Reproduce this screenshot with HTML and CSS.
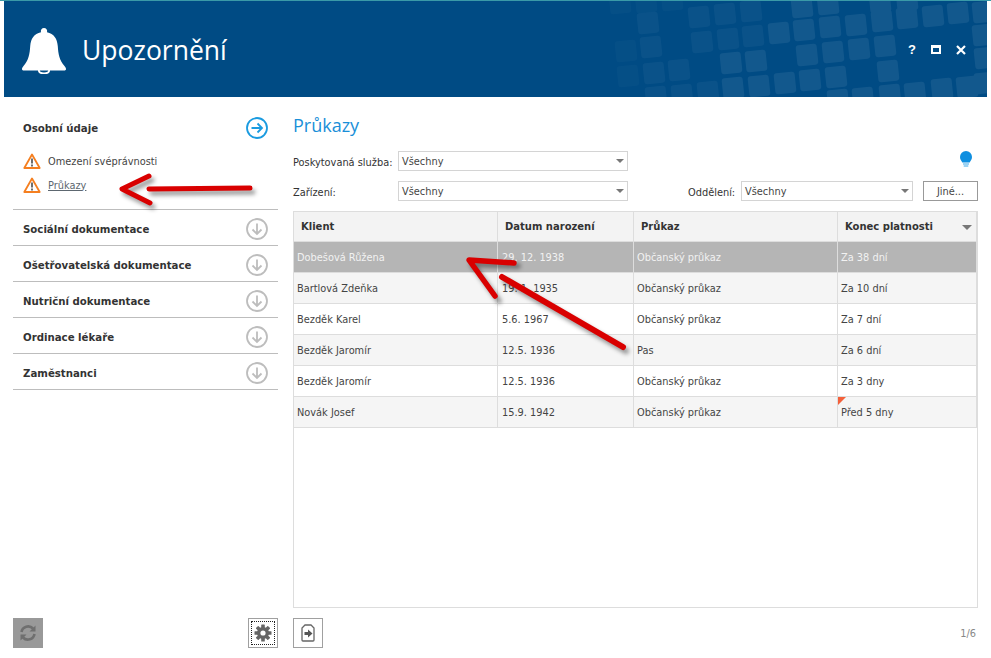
FILE: index.html
```html
<!DOCTYPE html>
<html lang="cs">
<head>
<meta charset="utf-8">
<title>Upozornění</title>
<link rel="stylesheet" href="styles.css">
</head>
<body>
<div class="window">
  <header class="header">
    <svg class="pattern" viewBox="4 1 983 96" width="983" height="96">
      <defs><rect id="sq" x="-10.5" y="-10.5" width="21" height="21" rx="3" transform="rotate(-6)"/></defs>
      <g fill="#fff" opacity=".02">
        <use href="#sq" x="626" y="51"/><use href="#sq" x="628" y="76"/><use href="#sq" x="620" y="3"/><use href="#sq" x="646" y="2"/><use href="#sq" x="672" y="0"/>
      </g>
      <g fill="#fff" opacity=".04">
        <use href="#sq" x="648" y="23"/><use href="#sq" x="651" y="47"/><use href="#sq" x="654" y="73"/><use href="#sq" x="679" y="70"/><use href="#sq" x="656" y="97"/><use href="#sq" x="682" y="95"/><use href="#sq" x="708" y="92"/><use href="#sq" x="699" y="17"/><use href="#sq" x="725" y="14"/><use href="#sq" x="751" y="11"/><use href="#sq" x="702" y="42"/><use href="#sq" x="728" y="39"/><use href="#sq" x="753" y="36"/>
      </g>
      <g fill="#fff" opacity=".07">
        <use href="#sq" x="731" y="63"/><use href="#sq" x="756" y="61"/><use href="#sq" x="733" y="88"/><use href="#sq" x="759" y="86"/><use href="#sq" x="785" y="83"/><use href="#sq" x="810" y="80"/><use href="#sq" x="779" y="33"/><use href="#sq" x="804" y="30"/><use href="#sq" x="802" y="7"/><use href="#sq" x="807" y="55"/><use href="#sq" x="828" y="4"/><use href="#sq" x="830" y="27"/><use href="#sq" x="856" y="25"/><use href="#sq" x="833" y="52"/><use href="#sq" x="859" y="49"/><use href="#sq" x="885" y="46"/><use href="#sq" x="836" y="77"/><use href="#sq" x="888" y="71"/><use href="#sq" x="838" y="100"/><use href="#sq" x="863" y="98"/><use href="#sq" x="890" y="95"/><use href="#sq" x="915" y="93"/><use href="#sq" x="942" y="89"/><use href="#sq" x="967" y="87"/><use href="#sq" x="985" y="83"/><use href="#sq" x="985" y="58"/><use href="#sq" x="983" y="35"/><use href="#sq" x="983" y="12"/><use href="#sq" x="958" y="13"/><use href="#sq" x="933" y="16"/><use href="#sq" x="907" y="18"/><use href="#sq" x="882" y="21"/><use href="#sq" x="880" y="2"/><use href="#sq" x="907" y="0"/>
      </g>
    </svg>
    <svg class="bell" viewBox="0 0 44 46" width="44" height="46">
      <path fill="#fff" d="M22 0a3.2 3.2 0 0 1 3 4.2c7 1.3 10.2 6.500 10.800 14 .5 7.500 1.500 14 6.700 19.800 1.500 1.700 1.500 2.800 1.500 3.200 0 .6-.6 1.300-1.800 1.300H1.800C.6 42.500 0 41.800 0 41.200c0-.4 0-1.500 1.500-3.200 5.200-5.800 6.200-12.300 6.700-19.800C8.800 10.700 12 5.500 19 4.200A3.200 3.200 0 0 1 22 0z"/>
      <path fill="none" stroke="#fff" stroke-width="2" d="M17 42a5.200 3.500 0 0 0 1 2.500c2 1.300 6 1.300 8 0a5.200 3.500 0 0 0 1-2.500"/>
    </svg>
    <h1 class="title">Upozornění</h1>
    <div class="controls">
      <span class="help">?</span>
      <span class="maximize"></span>
      <svg viewBox="0 0 10 10" width="10" height="10"><path d="M1 1l8 8M9 1l-8 8" stroke="#fff" stroke-width="2.200" fill="none"/></svg>
    </div>
  </header>

  <div class="content">
    <aside class="sidebar">
      <section class="section section-open">
        <div class="section-head">
          <span>Osobní údaje</span>
          <svg class="round" viewBox="0 0 22 22" width="22" height="22"><circle cx="11" cy="11" r="10" fill="none" stroke="#1a9be0" stroke-width="1.800"/><path d="M5.500 11h10.500M11.500 6.500l4.500 4.500-4.500 4.500" fill="none" stroke="#1a9be0" stroke-width="1.800"/></svg>
        </div>
        <ul class="items">
          <li class="item">
            <svg viewBox="0 0 18 16" width="18" height="16"><path d="M9 1.500l7.700 13.500H1.300z" fill="#fff" stroke="#f57f20" stroke-width="1.800" stroke-linejoin="round"/><path d="M9 5.500v5M9 11.500v2" stroke="#555" stroke-width="1.700"/></svg>
            <span>Omezení svéprávnosti</span>
          </li>
          <li class="item">
            <svg viewBox="0 0 18 16" width="18" height="16"><path d="M9 1.500l7.700 13.500H1.300z" fill="#fff" stroke="#f57f20" stroke-width="1.800" stroke-linejoin="round"/><path d="M9 5.500v5M9 11.500v2" stroke="#555" stroke-width="1.700"/></svg>
            <a class="link">Průkazy</a>
          </li>
        </ul>
      </section>
      <section class="section">
        <div class="section-head"><span>Sociální dokumentace</span><svg class="round" viewBox="0 0 22 22" width="22" height="22"><circle cx="11" cy="11" r="10" fill="none" stroke="#bdbdbd" stroke-width="1.800"/><path d="M11 5.500v10.500M6.500 11.500l4.500 4.500 4.500-4.500" fill="none" stroke="#bdbdbd" stroke-width="1.800"/></svg></div>
      </section>
      <section class="section">
        <div class="section-head"><span>Ošetřovatelská dokumentace</span><svg class="round" viewBox="0 0 22 22" width="22" height="22"><circle cx="11" cy="11" r="10" fill="none" stroke="#bdbdbd" stroke-width="1.800"/><path d="M11 5.500v10.500M6.500 11.500l4.500 4.500 4.500-4.500" fill="none" stroke="#bdbdbd" stroke-width="1.800"/></svg></div>
      </section>
      <section class="section">
        <div class="section-head"><span>Nutriční dokumentace</span><svg class="round" viewBox="0 0 22 22" width="22" height="22"><circle cx="11" cy="11" r="10" fill="none" stroke="#bdbdbd" stroke-width="1.800"/><path d="M11 5.500v10.500M6.500 11.500l4.500 4.500 4.500-4.500" fill="none" stroke="#bdbdbd" stroke-width="1.800"/></svg></div>
      </section>
      <section class="section">
        <div class="section-head"><span>Ordinace lékaře</span><svg class="round" viewBox="0 0 22 22" width="22" height="22"><circle cx="11" cy="11" r="10" fill="none" stroke="#bdbdbd" stroke-width="1.800"/><path d="M11 5.500v10.500M6.500 11.500l4.500 4.500 4.500-4.500" fill="none" stroke="#bdbdbd" stroke-width="1.800"/></svg></div>
      </section>
      <section class="section">
        <div class="section-head"><span>Zaměstnanci</span><svg class="round" viewBox="0 0 22 22" width="22" height="22"><circle cx="11" cy="11" r="10" fill="none" stroke="#bdbdbd" stroke-width="1.800"/><path d="M11 5.500v10.500M6.500 11.500l4.500 4.500 4.500-4.500" fill="none" stroke="#bdbdbd" stroke-width="1.800"/></svg></div>
      </section>
      <div class="sidebar-foot">
        <button class="icon-btn refresh">
          <svg viewBox="0 0 18 18" width="18" height="18"><path d="M2.500 8a6.700 6.700 0 0 1 11.500-3.500M15.500 10a6.700 6.700 0 0 1-11.500 3.500" fill="none" stroke="#6f6f6f" stroke-width="2.600"/><path d="M16.500 1.500v6h-6zM1.500 16.500v-6h6z" fill="#6f6f6f"/></svg>
        </button>
        <button class="icon-btn focused">
          <span class="dots"></span>
          <svg viewBox="0 0 18 18" width="18" height="18"><g fill="#666"><circle cx="9" cy="9" r="6"/><rect x="7.200" y="0.500" width="3.600" height="17" rx=".6"/><rect x="7.200" y="0.500" width="3.600" height="17" rx=".6" transform="rotate(45 9 9)"/><rect x="7.200" y="0.500" width="3.600" height="17" rx=".6" transform="rotate(90 9 9)"/><rect x="7.200" y="0.500" width="3.600" height="17" rx=".6" transform="rotate(135 9 9)"/></g><circle cx="9" cy="9" r="2.600" fill="#fff"/></svg>
        </button>
      </div>
    </aside>

    <main class="main">
      <h2 class="heading">Průkazy</h2>
      <div class="filter-row">
        <label class="label label-wide">Poskytovaná služba:</label>
        <div class="select select-wide">Všechny</div>
        <svg class="bulb" viewBox="0 0 12 17" width="12" height="17"><path d="M6 0a6 6 0 0 1 6 6c0 2.500-1.500 3.700-2.300 5.500H2.300C1.500 9.700 0 8.500 0 6a6 6 0 0 1 6-6z" fill="#0f8fe0"/><path d="M3 13h6M3.700 15h4.600" stroke="#3aa7ea" stroke-width="1.200"/></svg>
      </div>
      <div class="filter-row">
        <label class="label label-wide">Zařízení:</label>
        <div class="select select-wide">Všechny</div>
        <label class="label label-dept">Oddělení:</label>
        <div class="select select-dept">Všechny</div>
        <button class="other">Jiné...</button>
      </div>
      <div class="grid-frame">
        <table class="grid">
          <colgroup><col class="c1"><col class="c2"><col class="c3"><col class="c4"></colgroup>
          <thead>
            <tr><th>Klient</th><th>Datum narození</th><th>Průkaz</th><th class="sorted">Konec platnosti</th></tr>
          </thead>
          <tbody>
            <tr class="selected"><td>Dobešová Růžena</td><td class="date">29. 12. 1938</td><td>Občanský průkaz</td><td>Za 38 dní</td></tr>
            <tr class="alt"><td>Bartlová Zdeňka</td><td class="date">19. 1. 1935</td><td>Občanský průkaz</td><td>Za 10 dní</td></tr>
            <tr><td>Bezděk Karel</td><td class="date">5.6. 1967</td><td>Občanský průkaz</td><td>Za 7 dní</td></tr>
            <tr class="alt"><td>Bezděk Jaromír</td><td class="date">12.5. 1936</td><td>Pas</td><td>Za 6 dní</td></tr>
            <tr><td>Bezděk Jaromír</td><td class="date">12.5. 1936</td><td>Občanský průkaz</td><td>Za 3 dny</td></tr>
            <tr class="alt"><td>Novák Josef</td><td class="date">15.9. 1942</td><td>Občanský průkaz</td><td class="flagged">Před 5 dny</td></tr>
          </tbody>
        </table>
      </div>
      <div class="main-foot">
        <button class="icon-btn">
          <svg viewBox="0 0 14 18" width="14" height="18"><path d="M4 1h6l3 3v12a1 1 0 0 1-1 1H2a1 1 0 0 1-1-1V4z" fill="none" stroke="#666" stroke-width="1.300"/><path d="M3.500 8h3.500V5.500L11.500 9.500 7 13.500V11H3.500z" fill="#555"/></svg>
        </button>
        <span class="pager">1/6</span>
      </div>
    </main>
  </div>

  <svg class="annotations" viewBox="0 0 991 658" width="991" height="658">
    <defs><filter id="soft" x="-20%" y="-40%" width="140%" height="180%"><feGaussianBlur stdDeviation="2"/></filter></defs>
    <g fill="none" stroke-linecap="round" stroke-linejoin="round">
      <g stroke="#000" stroke-opacity=".4" filter="url(#soft)" transform="translate(3 4)">
        <path stroke-width="5" d="M149 176 122 189 150 203M149 189 250 188"/>
        <path stroke-width="5.500" d="M515 262 469 260 496 297"/>
        <path stroke-width="6" d="M502 277 623 347"/>
      </g>
      <g stroke="#d90000">
        <path stroke-width="5" d="M149 176 122 189 150 203"/>
        <path stroke-width="5" d="M149 189 250 188"/>
        <path stroke-width="5.500" d="M514 263 469 260 495 296"/>
        <path stroke-width="6" d="M502 277 623 347"/>
      </g>
    </g>
  </svg>
</div>
</body>
</html>
```

FILE: styles.css
```css
* { box-sizing: border-box; }
html, body { margin: 0; padding: 0; background: #fff; }
body { width: 991px; height: 658px; overflow: hidden; font-family: "DejaVu Sans", "Noto Sans", sans-serif; font-size: 9.8px; color: #333; }

.window { position: relative; width: 991px; height: 658px; display: flex; flex-direction: column; border-top: 1px solid #3a9aa8; }

.header { position: relative; margin-left: 4px; width: 983px; height: 96px; flex: none; background: #004b84; display: flex; align-items: center; color: #fff; overflow: hidden; }
.pattern { position: absolute; left: 0; top: 0; }
.bell { position: relative; margin-left: 18px; margin-top: 3px; flex: none; }
.title { position: relative; margin: 2px 0 0 16px; font-family: "Open Sans", sans-serif; font-weight: 400; font-size: 26.5px; line-height: 36px; }
.controls { position: relative; margin-left: auto; margin-right: 21px; margin-top: 1px; display: flex; align-items: center; gap: 15px; }
.help { font-family: "Liberation Sans", sans-serif; font-weight: 700; font-size: 13px; line-height: 13px; width: 8px; text-align: center; }
.maximize { width: 10px; height: 9px; border: 2px solid #fff; border-top-width: 3px; }

.content { flex: 1; display: flex; min-height: 0; }

.sidebar { width: 265px; margin-left: 13px; padding-top: 13px; padding-bottom: 10px; display: flex; flex-direction: column; flex: none; }
.section { border-bottom: 1px solid #bdbdbd; }
.section-open { padding-bottom: 12px; }
.section-head { height: 35px; display: flex; align-items: center; justify-content: space-between; padding: 3px 10px 0; font-weight: 700; font-size: 10.2px; color: #333; }
.section-open .section-head { height: 36px; padding: 0 10px; }
.round { flex: none; }
.items { list-style: none; margin: 3px 0 0; padding: 0 0 0 10px; }
.item { height: 24px; display: flex; align-items: center; gap: 7px; color: #444; }
.link { text-decoration: underline; color: #5d6770; }
.sidebar-foot { margin-top: auto; display: flex; justify-content: space-between; }

.icon-btn { position: relative; width: 30px; height: 30px; padding: 0; background: #fff; border: 1px solid #a0a0a0; display: flex; align-items: center; justify-content: center; }
.refresh { background: #999; border-color: #999; }
.dots { position: absolute; inset: 2px; border: 1px dotted #222; }

.main { width: 685px; margin-left: 15px; padding-top: 14px; padding-bottom: 10px; display: flex; flex-direction: column; flex: none; }
.heading { margin: 0 0 12px; height: 28px; font-family: "Open Sans", sans-serif; font-weight: 400; font-size: 18px; line-height: 28px; color: #1a8fd8; }
.filter-row { display: flex; align-items: center; height: 20px; margin-bottom: 10px; }
.label { flex: none; color: #333; padding-top: 2px; }
.label-wide { width: 105px; }
.label-dept { width: 53px; margin-left: 60px; }
.select { position: relative; height: 20px; border: 1px solid #d4d4d4; padding-left: 3px; line-height: 19px; color: #444; }
.select::after { content: ""; position: absolute; right: 3px; top: 7px; border: 4px solid transparent; border-top: 4px solid #777; border-bottom: 0; }
.select-wide { width: 230px; }
.select-dept { width: 172px; }
.bulb { margin-left: auto; margin-right: 6px; margin-top: -4px; }
.other { width: 55px; height: 20px; margin-left: 10px; padding: 0; background: #fff; border: 1px solid #999; font: inherit; color: #444; }

.grid-frame { flex: 1; min-height: 0; border: 1px solid #ddd; }
.grid { width: 683px; table-layout: fixed; border-collapse: separate; border-spacing: 0; }
.c1 { width: 204px; } .c2 { width: 136px; } .c3 { width: 204px; } .c4 { width: 139px; }
.grid th { height: 30px; padding: 0 0 0 7px; text-align: left; background: #f3f3f3; border-right: 1px solid #ddd; border-bottom: 1px solid #ddd; font-size: 10px; font-weight: 700; color: #333; }
.grid td { height: 31px; padding: 0 0 0 3px; border-right: 1px solid #ddd; border-bottom: 1px solid #ddd; color: #444; white-space: nowrap; }
.grid .date { padding-left: 4px; }
.grid .sorted { position: relative; }
.sorted::after { content: ""; position: absolute; right: 4px; top: 13px; border: 5px solid transparent; border-top: 5px solid #777; border-bottom: 0; }
.alt td { background: #f5f5f5; }
.selected td { background: #b5b5b5; color: #f2f2f2; }
.grid .flagged { position: relative; }
.flagged::before { content: ""; position: absolute; left: 0; top: 0; border-style: solid; border-width: 8px 8px 0 0; border-color: #f4603a transparent transparent transparent; }

.main-foot { flex: none; margin-top: 10px; height: 30px; display: flex; align-items: center; justify-content: space-between; }
.pager { color: #888; padding-right: 2px; }

.annotations { position: absolute; left: 0; top: -1px; pointer-events: none; }
```
